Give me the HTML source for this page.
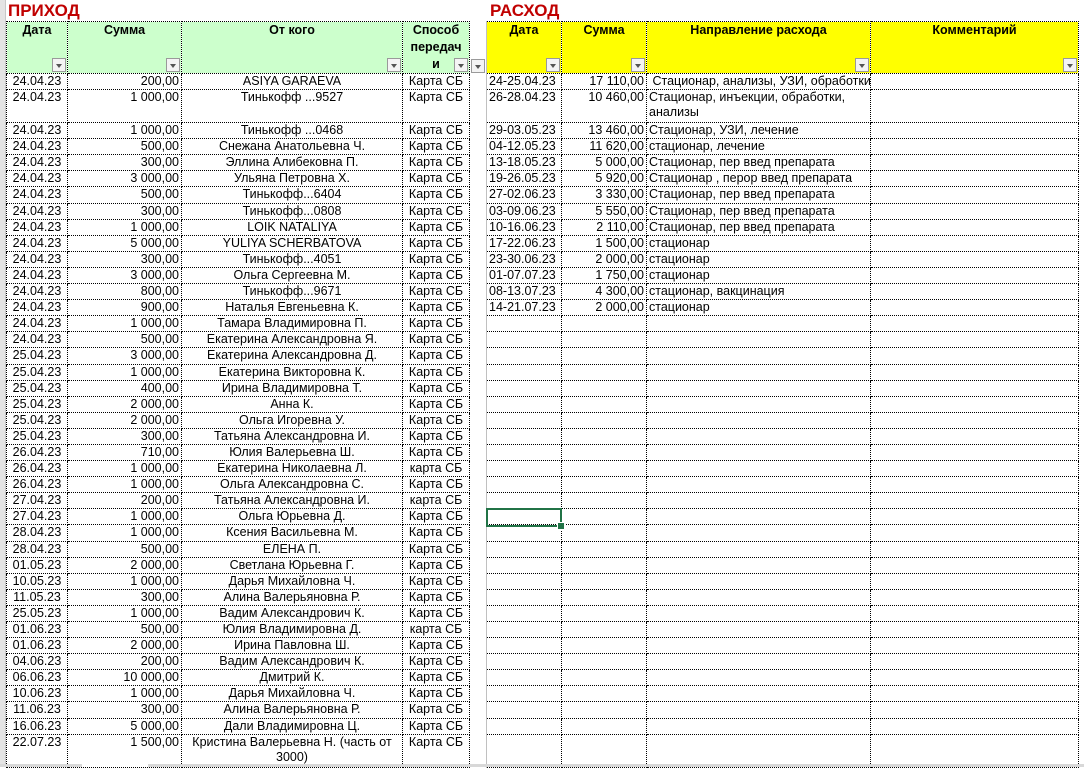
<!DOCTYPE html>
<html><head><meta charset="utf-8"><style>
body{margin:0;width:1084px;height:767px;overflow:hidden;background:#fff;font-family:"Liberation Sans","DejaVu Sans",sans-serif;position:relative}
.strip{position:absolute;left:0;top:0;width:5px;height:767px;background:#e4e4e4;border-right:1px solid #c8c8c8}
.t{position:absolute;top:1px;font-weight:bold;font-size:17px;color:#c00000}
table{position:absolute;left:6px;top:21px;width:1072px;border-collapse:collapse;table-layout:fixed;font-size:12.5px;color:#000}
td{border:1px dotted #000;padding:0 2px;line-height:15px;height:15.1px;vertical-align:top;white-space:nowrap;overflow:hidden}
tr.h td{height:49px;font-weight:bold;text-align:center;position:relative;white-space:normal;line-height:17px}
.g{background:#ccffcc}.y{background:#ffff00}
td.x{border-top:none;border-bottom:none;border-left:1px dotted #000;border-right:1px solid #c0c0c0}
tr.h td.x{background:#fff}
.c{text-align:center}.r{text-align:right}.l{text-align:left}
tr.d td{height:32px}
.f{position:absolute;right:1px;bottom:1px;width:14px;height:14px;background:#f4f4f4;border:1px solid #9a9a9a;box-sizing:border-box}
.f:after{content:"";position:absolute;left:3px;top:5px;border-left:3.5px solid transparent;border-right:3.5px solid transparent;border-top:4px solid #555}
.sel{position:absolute;left:486px;top:508px;width:72px;height:15px;border:2px solid #217346}
.sel:after{content:"";position:absolute;right:-5px;bottom:-5px;width:6px;height:6px;background:#217346;border:1px solid #fff}
.bot{position:absolute;top:764px;height:3px;background:#d8d8d8}
</style></head><body>
<div class="strip"></div>
<div class="t" style="left:8px">ПРИХОД</div>
<div class="t" style="left:490px">РАСХОД</div>
<table>
<colgroup><col style="width:61px"><col style="width:114px"><col style="width:221px"><col style="width:67px"><col style="width:17px"><col style="width:75px"><col style="width:85px"><col style="width:224px"><col style="width:208px"></colgroup>
<tr class="h"><td class="g">Дата<span class="f"></span></td><td class="g">Сумма<span class="f"></span></td><td class="g">От кого<span class="f"></span></td><td class="g">Способ<br>передач<br>и<span class="f"></span></td><td class="x"><span class="f"></span></td><td class="y">Дата<span class="f"></span></td><td class="y">Сумма<span class="f"></span></td><td class="y">Направление расхода<span class="f"></span></td><td class="y">Комментарий<span class="f"></span></td></tr>
<tr><td class="c">24.04.23</td><td class="r">200,00</td><td class="c">ASIYA GARAEVA</td><td class="c">Карта СБ</td><td class="x"></td><td class="l">24-25.04.23</td><td class="r">17 110,00</td><td>&nbsp;Стационар, анализы, УЗИ, обработки</td><td></td></tr>
<tr class="d"><td class="c">24.04.23</td><td class="r">1 000,00</td><td class="c">Тинькофф ...9527</td><td class="c">Карта СБ</td><td class="x"></td><td>26-28.04.23</td><td class="r">10 460,00</td><td style="white-space:normal">Стационар, инъекции, обработки, анализы</td><td></td></tr>
<tr><td class="c">24.04.23</td><td class="r">1 000,00</td><td class="c">Тинькофф ...0468</td><td class="c">Карта СБ</td><td class="x"></td><td>29-03.05.23</td><td class="r">13 460,00</td><td>Стационар, УЗИ, лечение</td><td></td></tr>
<tr><td class="c">24.04.23</td><td class="r">500,00</td><td class="c">Снежана Анатольевна Ч.</td><td class="c">Карта СБ</td><td class="x"></td><td>04-12.05.23</td><td class="r">11 620,00</td><td>стационар, лечение</td><td></td></tr>
<tr><td class="c">24.04.23</td><td class="r">300,00</td><td class="c">Эллина Алибековна П.</td><td class="c">Карта СБ</td><td class="x"></td><td>13-18.05.23</td><td class="r">5 000,00</td><td>Стационар, пер введ препарата</td><td></td></tr>
<tr><td class="c">24.04.23</td><td class="r">3 000,00</td><td class="c">Ульяна Петровна Х.</td><td class="c">Карта СБ</td><td class="x"></td><td>19-26.05.23</td><td class="r">5 920,00</td><td>Стационар , перор введ препарата</td><td></td></tr>
<tr><td class="c">24.04.23</td><td class="r">500,00</td><td class="c">Тинькофф...6404</td><td class="c">Карта СБ</td><td class="x"></td><td>27-02.06.23</td><td class="r">3 330,00</td><td>Стационар, пер введ препарата</td><td></td></tr>
<tr><td class="c">24.04.23</td><td class="r">300,00</td><td class="c">Тинькофф...0808</td><td class="c">Карта СБ</td><td class="x"></td><td>03-09.06.23</td><td class="r">5 550,00</td><td>Стационар, пер введ препарата</td><td></td></tr>
<tr><td class="c">24.04.23</td><td class="r">1 000,00</td><td class="c">LOIK NATALIYA</td><td class="c">Карта СБ</td><td class="x"></td><td>10-16.06.23</td><td class="r">2 110,00</td><td>Стационар, пер введ препарата</td><td></td></tr>
<tr><td class="c">24.04.23</td><td class="r">5 000,00</td><td class="c">YULIYA SCHERBATOVA</td><td class="c">Карта СБ</td><td class="x"></td><td>17-22.06.23</td><td class="r">1 500,00</td><td>стационар</td><td></td></tr>
<tr><td class="c">24.04.23</td><td class="r">300,00</td><td class="c">Тинькофф...4051</td><td class="c">Карта СБ</td><td class="x"></td><td>23-30.06.23</td><td class="r">2 000,00</td><td>стационар</td><td></td></tr>
<tr><td class="c">24.04.23</td><td class="r">3 000,00</td><td class="c">Ольга Сергеевна М.</td><td class="c">Карта СБ</td><td class="x"></td><td>01-07.07.23</td><td class="r">1 750,00</td><td>стационар</td><td></td></tr>
<tr><td class="c">24.04.23</td><td class="r">800,00</td><td class="c">Тинькофф...9671</td><td class="c">Карта СБ</td><td class="x"></td><td>08-13.07.23</td><td class="r">4 300,00</td><td>стационар, вакцинация</td><td></td></tr>
<tr><td class="c">24.04.23</td><td class="r">900,00</td><td class="c">Наталья Евгеньевна К.</td><td class="c">Карта СБ</td><td class="x"></td><td>14-21.07.23</td><td class="r">2 000,00</td><td>стационар</td><td></td></tr>
<tr><td class="c">24.04.23</td><td class="r">1 000,00</td><td class="c">Тамара Владимировна П.</td><td class="c">Карта СБ</td><td class="x"></td><td></td><td></td><td></td><td></td></tr>
<tr><td class="c">24.04.23</td><td class="r">500,00</td><td class="c">Екатерина Александровна Я.</td><td class="c">Карта СБ</td><td class="x"></td><td></td><td></td><td></td><td></td></tr>
<tr><td class="c">25.04.23</td><td class="r">3 000,00</td><td class="c">Екатерина Александровна Д.</td><td class="c">Карта СБ</td><td class="x"></td><td></td><td></td><td></td><td></td></tr>
<tr><td class="c">25.04.23</td><td class="r">1 000,00</td><td class="c">Екатерина Викторовна К.</td><td class="c">Карта СБ</td><td class="x"></td><td></td><td></td><td></td><td></td></tr>
<tr><td class="c">25.04.23</td><td class="r">400,00</td><td class="c">Ирина Владимировна Т.</td><td class="c">Карта СБ</td><td class="x"></td><td></td><td></td><td></td><td></td></tr>
<tr><td class="c">25.04.23</td><td class="r">2 000,00</td><td class="c">Анна К.</td><td class="c">Карта СБ</td><td class="x"></td><td></td><td></td><td></td><td></td></tr>
<tr><td class="c">25.04.23</td><td class="r">2 000,00</td><td class="c">Ольга Игоревна У.</td><td class="c">Карта СБ</td><td class="x"></td><td></td><td></td><td></td><td></td></tr>
<tr><td class="c">25.04.23</td><td class="r">300,00</td><td class="c">Татьяна Александровна И.</td><td class="c">Карта СБ</td><td class="x"></td><td></td><td></td><td></td><td></td></tr>
<tr><td class="c">26.04.23</td><td class="r">710,00</td><td class="c">Юлия Валерьевна Ш.</td><td class="c">Карта СБ</td><td class="x"></td><td></td><td></td><td></td><td></td></tr>
<tr><td class="c">26.04.23</td><td class="r">1 000,00</td><td class="c">Екатерина Николаевна Л.</td><td class="c">карта СБ</td><td class="x"></td><td></td><td></td><td></td><td></td></tr>
<tr><td class="c">26.04.23</td><td class="r">1 000,00</td><td class="c">Ольга Александровна С.</td><td class="c">Карта СБ</td><td class="x"></td><td></td><td></td><td></td><td></td></tr>
<tr><td class="c">27.04.23</td><td class="r">200,00</td><td class="c">Татьяна Александровна И.</td><td class="c">карта СБ</td><td class="x"></td><td></td><td></td><td></td><td></td></tr>
<tr><td class="c">27.04.23</td><td class="r">1 000,00</td><td class="c">Ольга Юрьевна Д.</td><td class="c">Карта СБ</td><td class="x"></td><td></td><td></td><td></td><td></td></tr>
<tr><td class="c">28.04.23</td><td class="r">1 000,00</td><td class="c">Ксения Васильевна М.</td><td class="c">Карта СБ</td><td class="x"></td><td></td><td></td><td></td><td></td></tr>
<tr><td class="c">28.04.23</td><td class="r">500,00</td><td class="c">ЕЛЕНА П.</td><td class="c">Карта СБ</td><td class="x"></td><td></td><td></td><td></td><td></td></tr>
<tr><td class="c">01.05.23</td><td class="r">2 000,00</td><td class="c">Светлана Юрьевна Г.</td><td class="c">Карта СБ</td><td class="x"></td><td></td><td></td><td></td><td></td></tr>
<tr><td class="c">10.05.23</td><td class="r">1 000,00</td><td class="c">Дарья Михайловна Ч.</td><td class="c">Карта СБ</td><td class="x"></td><td></td><td></td><td></td><td></td></tr>
<tr><td class="c">11.05.23</td><td class="r">300,00</td><td class="c">Алина Валерьяновна Р.</td><td class="c">Карта СБ</td><td class="x"></td><td></td><td></td><td></td><td></td></tr>
<tr><td class="c">25.05.23</td><td class="r">1 000,00</td><td class="c">Вадим Александрович К.</td><td class="c">Карта СБ</td><td class="x"></td><td></td><td></td><td></td><td></td></tr>
<tr><td class="c">01.06.23</td><td class="r">500,00</td><td class="c">Юлия Владимировна Д.</td><td class="c">карта СБ</td><td class="x"></td><td></td><td></td><td></td><td></td></tr>
<tr><td class="c">01.06.23</td><td class="r">2 000,00</td><td class="c">Ирина Павловна Ш.</td><td class="c">Карта СБ</td><td class="x"></td><td></td><td></td><td></td><td></td></tr>
<tr><td class="c">04.06.23</td><td class="r">200,00</td><td class="c">Вадим Александрович К.</td><td class="c">Карта СБ</td><td class="x"></td><td></td><td></td><td></td><td></td></tr>
<tr><td class="c">06.06.23</td><td class="r">10 000,00</td><td class="c">Дмитрий К.</td><td class="c">Карта СБ</td><td class="x"></td><td></td><td></td><td></td><td></td></tr>
<tr><td class="c">10.06.23</td><td class="r">1 000,00</td><td class="c">Дарья Михайловна Ч.</td><td class="c">Карта СБ</td><td class="x"></td><td></td><td></td><td></td><td></td></tr>
<tr><td class="c">11.06.23</td><td class="r">300,00</td><td class="c">Алина Валерьяновна Р.</td><td class="c">Карта СБ</td><td class="x"></td><td></td><td></td><td></td><td></td></tr>
<tr><td class="c">16.06.23</td><td class="r">5 000,00</td><td class="c">Дали Владимировна Ц.</td><td class="c">Карта СБ</td><td class="x"></td><td></td><td></td><td></td><td></td></tr>
<tr class="d"><td class="c">22.07.23</td><td class="r">1 500,00</td><td class="c" style="white-space:normal">Кристина Валерьевна Н. (часть от 3000)</td><td class="c">Карта СБ</td><td class="x"></td><td></td><td></td><td></td><td></td></tr>
</table>
<div class="sel"></div>
<div class="bot" style="left:0;width:82px"></div>
<div class="bot" style="left:148px;width:936px"></div>
</body></html>
